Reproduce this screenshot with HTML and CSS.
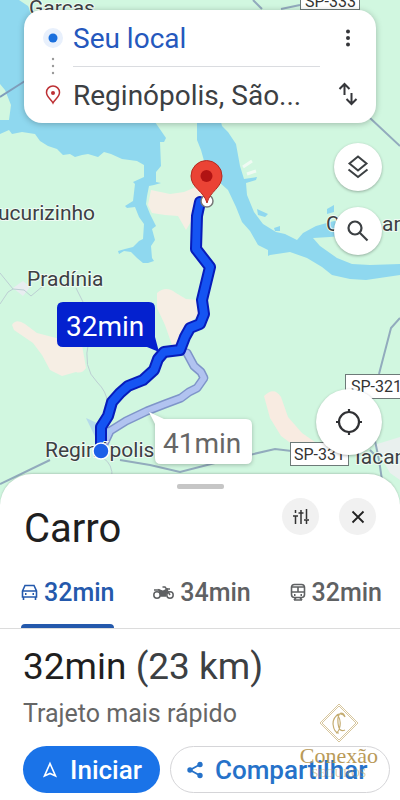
FILE: index.html
```html
<!DOCTYPE html>
<html lang="pt-BR">
<head>
  <meta charset="UTF-8">
  <meta name="viewport" content="width=device-width, initial-scale=1">
  <title>Rota para Reginópolis</title>
  <link rel="stylesheet" href="styles.css">
</head>
<body>

  <!-- MAPA -->
  <section class="map">
    <svg class="map-canvas" viewBox="0 0 400 504" preserveAspectRatio="xMidYMin slice" role="img" aria-label="Mapa da rota">
      <rect width="400" height="504" fill="#d1f7e0"/>

      <!-- Rios -->
      <g fill="#8fd8ef">
        <path d="M0 0H19L28 6L35 20L40 80V110H152L155 122L166 138L164 142H160L161 166L156 172V182L161 183L154 185L149 186L147 196L146 204L150 214L155 224L156 226L152 229L155 240L151 246L152 258L154 261L148 263H143L137 258L131 252L124 251L119 254L118 251L125 249L133 247L139 241L143 239L144 224L139 217L135 207L127 208L125 206L133 201L135 184L133 182L144 177V165L137 161L122 159L111 154L104 152L98 157L88 154L82 155L75 157L70 154L63 155L57 149L48 146L40 141L35 134L22 132L12 134L9 130L0 134V120L9 120L11 105L5 90L0 84Z"/>
        <path d="M197 118H220L222 126L228 132L236 144L240 166L244 179L257 177L256 180L246 183L247 195L254 212L263 224L276 232L285 234L297 240L303 233L316 226L334 221L352 226V235L330 237L313 238L320 246L337 258L352 264L370 265L400 264V275L366 280L350 279L332 275L322 267L307 258L290 252L270 255L268 256V250L258 245L250 231L242 222L236 207L228 190L219 182L206 168L201 150L197 140Z"/>
        <path d="M257 209L268 214L265 217L258 215ZM274 228L280 226L280 231L275 231ZM327 209L334 205V212L327 214Z"/>
      </g>
      <path d="M243 167L252 161M247 174L256 171" stroke="#f0faf3" stroke-width="3"/>

      <!-- Áreas urbanas -->
      <g fill="#f6eee4">
        <path d="M151 190L170 194L184 192L196 187L212 190L204 205L192 220L186 230L178 216L165 215L152 213L148 205Z"/>
        <path d="M157 293Q166 285 176 293L186 299L198 300L199 315L188 324L180 344L172 345L165 325L157 308Z"/>
        <path d="M12 325Q16 318 25 324L37 333L60 339L82 345L86 368Q82 374 76 372L62 376L50 370L42 355L33 343L14 330Z"/>
        <path d="M264 396Q274 386 281 397L288 417L302 433L325 449L316 456L300 450L281 436L270 418Z" fill="#f8ebe1"/>
        <path d="M374 445L400 437V480L390 473Z" fill="#e9f0ee"/>
        <path d="M13 288L23 281L30 287L23 296Z" fill="#e8edf0"/>
      </g>

      <!-- Estradas -->
      <g fill="none" stroke="#bccfd3" stroke-width="1">
        <path d="M0 273L13 289L24 290L31 296L43 286M0 304L8 292L13 289M76 288L83 302M89 340Q82 368 97 382Q107 392 107 402M103 458Q113 464 112 478"/>
      </g>
      <g fill="none" stroke="#92abbd" stroke-width="2">
        <path d="M0 484L50 460M120 460L150 465L180 472L215 463L275 449L300 452M370 450L375 455M379 374L391 328L400 318M374 436L379 460L382 480M253 0L262 9M281 9L300 5M370 118L400 146"/>
        <path d="M0 97L25 81" stroke="#7f9dbb"/>
      </g>

      <!-- Rota alternativa -->
      <g fill="none" stroke-linejoin="round" stroke-linecap="round">
        <path d="M103 446L110 431L126 421L147 411L165 404L181 398L189 392L197 388L204 378L201 372L194 366L187 353" stroke="#7f95c9" stroke-width="9"/>
        <path d="M103 446L110 431L126 421L147 411L165 404L181 398L189 392L197 388L204 378L201 372L194 366L187 353" stroke="#b1c3f0" stroke-width="6"/>
      </g>

      <!-- Rota principal -->
      <path d="M86 418L101 449L112 430Z" fill="#a8cdef" opacity=".7"/>
      <g fill="none" stroke-linejoin="round" stroke-linecap="round">
        <path d="M101 447V427L108 416L112 402L120 393L128 386L143 380L154 370L158 359L164 352L172 351L180 350L185 337L190 328L200 324L204 314L202 300L210 267L196 249L197 216L200 202" stroke="#071cba" stroke-width="12"/>
        <path d="M101 447V427L108 416L112 402L120 393L128 386L143 380L154 370L158 359L164 352L172 351L180 350L185 337L190 328L200 324L204 314L202 300L210 267L196 249L197 216L200 202" stroke="#1554f2" stroke-width="8"/>
      </g>

      <!-- Destino -->
      <circle cx="207" cy="201" r="6" fill="#fff" stroke="#777" stroke-width="1.5"/>
      <path d="M207 203C204 191 191 188 191 176a15.5 15.5 0 0 1 31 0C222 188 210 191 207 203Z" fill="#ea4335" stroke="#b52b22"/>
      <circle cx="206.5" cy="176" r="6" fill="#b11313"/>

      <!-- Nomes -->
      <g class="places">
        <text x="29" y="15">Garças</text>
        <text x="-2" y="220">ucurizinho</text>
        <text x="27" y="286">Pradínia</text>
        <text x="45" y="457">Reginópolis</text>
        <text x="326" y="231">C</text>
        <text x="382" y="231">ar</text>
        <text x="355" y="464">Iacanga</text>
      </g>
      <g class="shields">
        <rect x="300.5" y="-12.5" width="59" height="22"/>
        <text x="305" y="7">SP-333</text>
        <rect x="345.5" y="374.5" width="62" height="24"/>
        <text x="351" y="392">SP-321</text>
        <rect x="290.5" y="442.5" width="58" height="23"/>
        <text x="294" y="460">SP-331</text>
      </g>

      <circle cx="101" cy="451" r="8" fill="#1c60e8" stroke="#fff" stroke-width="1.5"/>

      <!-- Tempos -->
      <path d="M63 302H149Q155 302 155 308V337L159 352L147 347H63Q57 347 57 341V308Q57 302 63 302Z" fill="#0421cf"/>
      <text class="time" x="66" y="336">32min</text>
      <g class="bubble">
        <path d="M149 412L164 419H246Q252 419 252 425V458Q252 464 246 464H161Q155 464 155 458V424Z" fill="#fff"/>
      </g>
      <text class="time time-alt" x="163" y="453">41min</text>
    </svg>

    <div class="directions">
      <div class="stops">
        <svg class="stops-icons" viewBox="0 0 24 92" aria-hidden="true">
          <circle cx="12" cy="17" r="10" fill="#e8f0fc"/>
          <circle cx="12" cy="17" r="4.5" fill="#1a6fdd"/>
          <g fill="#999"><circle cx="12" cy="38" r="1.2"/><circle cx="12" cy="45" r="1.2"/><circle cx="12" cy="52" r="1.2"/></g>
          <path d="M12 82C10 78 5.5 76 5.5 71.5a6.5 6.5 0 0 1 13 0C18.5 76 14 78 12 82Z" fill="none" stroke="#bd3034" stroke-width="1.5"/>
          <circle cx="12" cy="72" r="2" fill="#bd3034"/>
        </svg>
        <div class="stops-fields">
          <input class="stop stop-origin" type="text" value="Seu local" aria-label="Origem">
          <input class="stop" type="text" value="Reginópolis, São..." aria-label="Destino">
        </div>
      </div>
      <div class="directions-actions">
        <button type="button" aria-label="Mais opções">
          <svg width="24" height="24" viewBox="0 0 24 24" fill="#35363a"><circle cx="12" cy="5.500" r="2"/><circle cx="12" cy="12" r="2"/><circle cx="12" cy="18.500" r="2"/></svg>
        </button>
        <button type="button" aria-label="Inverter origem e destino">
          <svg width="24" height="24" viewBox="0 0 24 24" fill="none" stroke="#35363a" stroke-width="2"><path d="M8.500 13V2M3.500 7L8.500 2L13.500 7M15.500 11V22M10.500 17L15.500 22L20.500 17"/></svg>
        </button>
      </div>
    </div>

    <div class="map-controls">
      <button class="round" type="button" aria-label="Camadas">
        <svg width="24" height="24" viewBox="0 0 24 24" fill="none" stroke="#3c4043" stroke-width="2"><path d="M12 1.500L20.500 8.500L12 15.500L3.500 8.500ZM2.500 14.500L12 22L21.500 14.500"/></svg>
      </button>
      <button class="round" type="button" aria-label="Pesquisar">
        <svg width="24" height="24" viewBox="0 0 24 24" fill="none" stroke="#3c4043" stroke-width="2.200"><circle cx="9" cy="9" r="6.500"/><path d="M13.500 13.500L21.500 21.500"/></svg>
      </button>
      <button class="round round-big" type="button" aria-label="Minha localização">
        <svg width="28" height="28" viewBox="0 0 28 28" fill="none" stroke="#303134" stroke-width="2.200"><circle cx="14" cy="14" r="10"/><path d="M14 1V5M14 23V27M1 14H5M23 14H27"/></svg>
      </button>
    </div>
  </section>

  <!-- PAINEL -->
  <main class="sheet">
    <div class="handle"></div>

    <header class="sheet-header">
      <h1>Carro</h1>
      <div class="sheet-tools">
        <button type="button" aria-label="Opções">
          <svg width="18" height="18" viewBox="0 0 18 18" fill="none" stroke="#333" stroke-width="1.500"><path d="M3.500 2V5M3.500 8V16M1 8H6M9 2V5M9 5V16M6.500 5H11.500M14.500 1V11M14.500 12V16M12 12H17"/></svg>
        </button>
        <button type="button" aria-label="Fechar">
          <svg width="18" height="18" viewBox="0 0 18 18" fill="none" stroke="#222" stroke-width="1.800"><path d="M3.500 3.500L14.500 14.500M14.500 3.500L3.500 14.500"/></svg>
        </button>
      </div>
    </header>

    <nav class="modes">
      <a class="mode active" href="#carro">
        <svg width="17" height="18" viewBox="0 0 17 18" fill="none" stroke="currentColor" stroke-width="1.600"><path d="M1.500 8L4 2.500H13L15.500 8V14H1.500ZM1.500 8H15.500M2.500 14V17M14.500 14V17"/><path d="M4 11H5.500M11.500 11H13" stroke-width="2"/></svg>
        32min
      </a>
      <a class="mode" href="#moto">
        <svg width="21" height="18" viewBox="0 0 21 18" fill="none" stroke="currentColor" stroke-width="1.500"><circle cx="4" cy="12" r="3.200"/><circle cx="17" cy="12" r="3.200"/><path d="M1 7H6L10 9L14 6.500L12 4H9.500M13.500 6H17M14 7L17 12"/><path d="M6 7L10 8.500L14 6.500L12.500 13H8Z" fill="currentColor"/></svg>
        34min
      </a>
      <a class="mode" href="#transporte">
        <svg width="16" height="18" viewBox="0 0 16 18" fill="none" stroke="currentColor" stroke-width="1.600"><rect x="1.500" y="1.500" width="13" height="13" rx="3"/><path d="M1.500 4H14.500M1.500 9H14.500M8 4V9M4 17L6 14.500M12 17L10 14.500M4 17H12"/><path d="M4 12H5.500M10.500 12H12" stroke-width="2"/></svg>
        32min
      </a>
    </nav>

    <section class="route">
      <h2>32min <span>(23 km)</span></h2>
      <p>Trajeto mais rápido</p>
      <div class="route-actions">
        <button class="pill pill-start" type="button">
          <svg width="18" height="18" viewBox="0 0 18 18" fill="none" stroke="currentColor" stroke-width="1.600"><path d="M9 2.500L14.500 15L9 12.500L3.500 15Z"/></svg>
          Iniciar
        </button>
        <button class="pill pill-share" type="button">
          <svg width="18" height="18" viewBox="0 0 18 18" fill="currentColor" stroke="currentColor" stroke-width="1.800"><path d="M14 3.500L4 9L14 14.500" fill="none"/><circle cx="14" cy="3.500" r="1.800"/><circle cx="4" cy="9" r="1.800"/><circle cx="14" cy="14.500" r="1.800"/></svg>
          Compartilhar
        </button>
      </div>

      <!-- Marca d'água -->
      <div class="watermark">
        <svg width="40" height="40" viewBox="0 0 40 40" fill="none" stroke="#c5ad72">
          <path d="M20 1L39 20L20 39L1 20ZM20 3L37 20L20 37L3 20Z" stroke-width=".7"/>
          <path d="M26 14Q24 10 20 11Q14 14 14 21Q15 30 20 30M26 14Q25 10 22 10Q18 12 19 20Q20 30 26 27M18 11Q22 16 21 23Q20 29 17 30" stroke-width="1.200"/>
        </svg>
        <strong>Conexão</strong>
        <small>SEGUROS</small>
      </div>
    </section>
  </main>

</body>
</html>
```

FILE: styles.css
```css
* {
  box-sizing: border-box;
}

body {
  margin: 0;
  font-family: Roboto, "Liberation Sans", sans-serif;
  background-color: #fff;
  color: #1f1f1f;
}

button {
  display: flex;
  align-items: center;
  justify-content: center;
  padding: 0;
  border: 0;
  background: none;
  font-family: inherit;
  cursor: pointer;
}

/* Mapa */
.map {
  position: relative;
  display: flex;
  flex-direction: column;
  min-height: 504px;
  padding: 10px 18px 49px;
  overflow: hidden;
}

.map-canvas {
  position: absolute;
  top: 0;
  left: 0;
  width: 100%;
  height: 100%;
}

.places text {
  font-size: 21px;
  fill: #3c4043;
  stroke: #effbf4;
  stroke-width: 2px;
  paint-order: stroke;
}

.shields rect {
  fill: #fff;
  stroke: #6d7a78;
}

.shields text {
  font-size: 16px;
  fill: #333;
}

.time {
  font-size: 28px;
  fill: #fff;
}

.time-alt {
  fill: #666;
}

.bubble {
  filter: drop-shadow(0 1px 2px rgba(0, 0, 0, 0.25));
}

/* Origem e destino */
.directions {
  position: relative;
  display: flex;
  margin: 0 6px;
  padding-left: 17px;
  border-radius: 18px;
  background-color: #fff;
  box-shadow: 0 1px 6px rgba(0, 0, 0, 0.25);
}

.stops {
  display: flex;
  flex: 1;
  min-width: 0;
}

.stops-icons {
  flex: none;
  width: 24px;
  height: 92px;
  margin-top: 11px;
}

.stops-fields {
  flex: 1;
  min-width: 0;
  margin-left: 8px;
}

.stop {
  display: block;
  width: 100%;
  height: 56px;
  padding: 0;
  border: 0;
  outline: 0;
  background: none;
  font-family: inherit;
  font-size: 28px;
  color: #3c4043;
}

.stop-origin {
  height: 57px;
  border-bottom: 1px solid #dadce0;
  color: #2558bd;
}

.directions-actions {
  width: 56px;
}

.directions-actions button {
  width: 56px;
  height: 56px;
}

/* Botões do mapa */
.map-controls {
  position: relative;
  display: flex;
  flex: 1;
  flex-direction: column;
  align-items: flex-end;
  gap: 16px;
  margin-top: 20px;
}

.round {
  width: 48px;
  height: 48px;
  border-radius: 50%;
  background-color: #fff;
  box-shadow: 0 1px 3px rgba(0, 0, 0, 0.3);
}

.round-big {
  width: 66px;
  height: 66px;
  margin-top: auto;
}

/* Painel */
.sheet {
  position: relative;
  margin-top: -30px;
  padding-top: 10px;
  border-radius: 32px 32px 0 0;
  background-color: #fff;
  box-shadow: 0 -1px 2px rgba(0, 0, 0, 0.15);
}

.handle {
  width: 47px;
  height: 5px;
  margin: 0 auto;
  border-radius: 2px;
  background-color: #c6c6c6;
}

.sheet-header {
  display: flex;
  justify-content: space-between;
  padding: 9px 24px 0;
}

.sheet-header h1 {
  margin: 7px 0 0;
  font-size: 40px;
  font-weight: 400;
  line-height: 48px;
}

.sheet-tools {
  display: flex;
  gap: 20px;
}

.sheet-tools button {
  width: 37px;
  height: 37px;
  border-radius: 50%;
  background-color: #f1f1f1;
}

.modes {
  display: flex;
  justify-content: space-between;
  margin-top: 15px;
  padding: 0 18px 0 21px;
  border-bottom: 1px solid #dcdcdc;
}

.mode {
  display: flex;
  align-items: center;
  gap: 6px;
  height: 60px;
  padding-bottom: 8px;
  border-bottom: 4px solid transparent;
  font-size: 25px;
  font-weight: 500;
  color: #5f6163;
  text-decoration: none;
}

.active {
  position: relative;
  color: #2459ac;
}

.active::after {
  content: "";
  position: absolute;
  right: 0;
  bottom: -4px;
  left: 0;
  height: 4px;
  border-radius: 4px 4px 0 0;
  background-color: #2459ac;
}

.route {
  position: relative;
  padding: 16px 10px 7px 23px;
}

.route h2 {
  margin: 0;
  font-size: 37px;
  font-weight: 400;
  line-height: 44px;
}

.route h2 span {
  color: #3c4043;
}

.route p {
  margin: 9px 0 0;
  font-size: 25px;
  line-height: 32px;
  color: #666;
}

.route-actions {
  display: flex;
  gap: 10px;
  margin-top: 16px;
}

.pill {
  gap: 11px;
  height: 47px;
  border-radius: 24px;
  font-size: 26px;
  font-weight: 500;
}

.pill-start {
  width: 137px;
  background-color: #1a73e8;
  color: #fff;
}

.pill-share {
  flex: 1;
  justify-content: flex-start;
  padding-left: 15px;
  border: 1px solid #d5d5d8;
  color: #2672c9;
}

/* Marca d'água sobre o botão */
.watermark {
  position: absolute;
  right: 22px;
  bottom: 21px;
  display: flex;
  flex-direction: column;
  align-items: center;
  font-family: "Liberation Serif", serif;
  color: #b99a58;
  pointer-events: none;
}

.watermark strong {
  margin-top: 2px;
  font-size: 22px;
  font-weight: 400;
  line-height: 22px;
}

.watermark small {
  font-size: 12px;
  line-height: 12px;
  opacity: 0.5;
}
```
